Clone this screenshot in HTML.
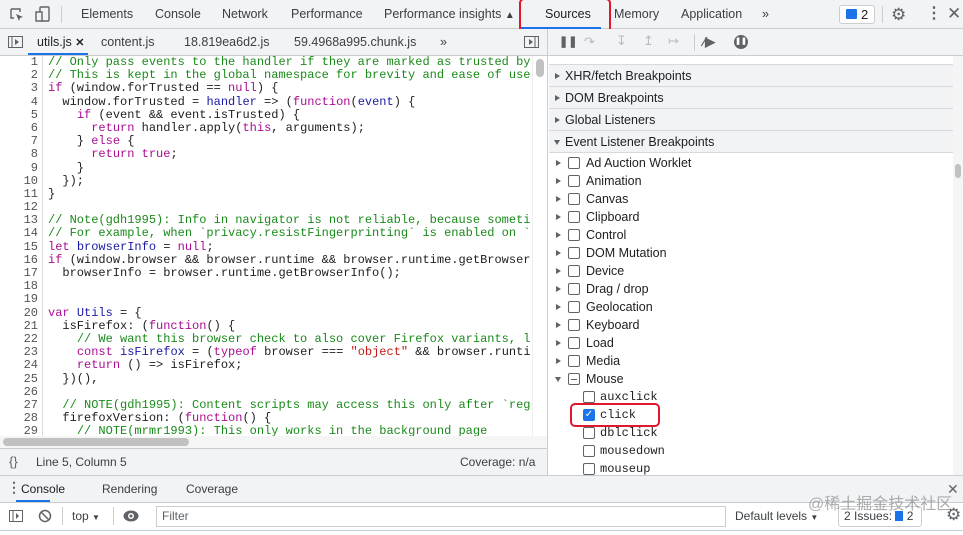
<!DOCTYPE html>
<html><head><meta charset="utf-8"><style>
*{box-sizing:border-box;margin:0;padding:0}
body{width:963px;height:535px;overflow:hidden;font-family:"Liberation Sans",sans-serif;font-size:12px;color:#202124;background:#fff;position:relative}
.abs{position:absolute}
.bar{background:#f1f3f4;border-bottom:1px solid #cbcdd1}
.t{position:absolute;top:0;line-height:29px;color:#3c4043;font-size:12.5px}
.code{position:absolute;left:0;top:56px;width:532px;height:380px;overflow:hidden;font-family:"Liberation Mono",monospace;font-size:12px;line-height:13.18px;white-space:pre}
.ln{position:absolute;left:0;width:38px;text-align:right;color:#555;top:0}
.src{position:absolute;left:48px;top:0}
.c{color:#1a8a1a}.k{color:#aa0d91}.v{color:#1c00cf}.d{color:#1a1aa6}.s{color:#c41a16}
.sec{position:absolute;left:549px;width:404px;height:22px;line-height:22px;background:#f1f3f4;border-bottom:1px solid #d7d9dc;padding-left:16px;font-size:12.5px}
.sec:before{content:"";position:absolute;left:6px;top:8px;border-left:5px solid #5f6368;border-top:3px solid transparent;border-bottom:3px solid transparent}
.sec.o:before{left:5px;top:9px;border-top:5px solid #5f6368;border-left:3px solid transparent;border-right:3px solid transparent;border-bottom:0}
.it{position:absolute;left:549px;height:18px;line-height:18px;font-size:12.5px}
.it .a{position:absolute;left:7px;top:6px;border-left:5px solid #5f6368;border-top:3px solid transparent;border-bottom:3px solid transparent}
.it .a.o{left:6px;top:7px;border-top:5px solid #5f6368;border-left:3px solid transparent;border-right:3px solid transparent;border-bottom:0}
.cb{position:absolute;width:12px;height:12px;border:1px solid #5f6368;border-radius:2px;top:3px;background:#fff}
.it span{position:absolute;white-space:nowrap}
.m{font-family:"Liberation Mono",monospace;font-size:12px}
</style></head><body>
<!-- top bar -->
<div class="abs bar" style="left:0;top:0;width:963px;height:29px"></div>
<svg class="abs" style="left:9px;top:7px" width="16" height="16"><path d="M2 2h9v3M2 2v9h3" fill="none" stroke="#5f6368" stroke-width="1.4"/><path d="M7 7l7 3-3 1-1 3z" fill="#5f6368"/></svg>
<svg class="abs" style="left:35px;top:6px" width="16" height="17"><rect x="5" y="1" width="9" height="14" rx="1" fill="none" stroke="#5f6368" stroke-width="1.4"/><rect x="1" y="6" width="6" height="9" fill="#f1f3f4" stroke="#5f6368" stroke-width="1.4"/></svg>
<div class="abs" style="left:61px;top:6px;width:1px;height:17px;background:#cbcdd1"></div>
<div class="t" style="left:81px">Elements</div>
<div class="t" style="left:155px">Console</div>
<div class="t" style="left:222px">Network</div>
<div class="t" style="left:291px">Performance</div>
<div class="t" style="left:384px">Performance insights <span style="font-size:10px">&#9650;</span></div>
<div class="t" style="left:545px;color:#202124">Sources</div>
<div class="abs" style="left:519px;top:27px;width:82px;height:2px;background:#1a73e8"></div>
<div class="abs" style="left:519px;top:-2px;width:92px;height:35px;border:2px solid #e0182d;border-radius:5px"></div>
<div class="t" style="left:614px">Memory</div>
<div class="t" style="left:681px">Application</div>
<div class="t" style="left:762px">»</div>
<div class="abs" style="left:839px;top:5px;width:36px;height:19px;border:1px solid #cbcdd1;border-radius:3px;background:#fff"></div>
<div class="abs" style="left:846px;top:9px;width:11px;height:10px;background:#1a73e8;border-radius:1px"></div>
<div class="abs" style="left:861px;top:5px;line-height:19px;font-size:13px">2</div>
<div class="abs" style="left:882px;top:6px;width:1px;height:17px;background:#cbcdd1"></div>
<div class="abs" style="left:891px;top:5px;font-size:17px;color:#5f6368">&#9881;</div>
<div class="abs" style="left:926px;top:3px;font-size:16px;color:#5f6368;font-weight:bold">&#8942;</div>
<div class="abs" style="left:947px;top:4px;font-size:17px;color:#5f6368">&#10005;</div>

<!-- file tabs -->
<div class="abs bar" style="left:0;top:29px;width:547px;height:27px"></div>
<svg class="abs" style="left:8px;top:36px" width="16" height="13"><rect x="0.5" y="0.5" width="14" height="11" fill="none" stroke="#5f6368"/><path d="M4 1v11" stroke="#5f6368"/><path d="M7 3l4 3-4 3z" fill="#5f6368"/></svg>
<div class="t" style="left:37px;top:29px;line-height:26px;color:#202124">utils.js <b style="font-size:11px">✕</b></div>
<div class="abs" style="left:28px;top:53px;width:60px;height:2px;background:#1a73e8"></div>
<div class="t" style="left:101px;top:29px;line-height:26px">content.js</div>
<div class="t" style="left:184px;top:29px;line-height:26px">18.819ea6d2.js</div>
<div class="t" style="left:294px;top:29px;line-height:26px">59.4968a995.chunk.js</div>
<div class="t" style="left:440px;top:29px;line-height:26px">»</div>
<svg class="abs" style="left:524px;top:36px" width="16" height="13"><rect x="0.5" y="0.5" width="14" height="11" fill="none" stroke="#5f6368"/><path d="M11 1v11" stroke="#5f6368"/><path d="M5 3l4 3-4 3z" fill="#5f6368"/></svg>

<!-- code -->
<div class="code"><div class="ln">1
2
3
4
5
6
7
8
9
10
11
12
13
14
15
16
17
18
19
20
21
22
23
24
25
26
27
28
29</div><div class="abs" style="left:42px;top:0;width:1px;height:380px;background:#ddd"></div><div class="src"><span class="c">// Only pass events to the handler if they are marked as trusted by</span>
<span class="c">// This is kept in the global namespace for brevity and ease of use</span>
<span class="k">if</span> (window.forTrusted == <span class="k">null</span>) {
  window.forTrusted = <span class="d">handler</span> => (<span class="k">function</span>(<span class="d">event</span>) {
    <span class="k">if</span> (event &amp;&amp; event.isTrusted) {
      <span class="k">return</span> handler.apply(<span class="k">this</span>, arguments);
    } <span class="k">else</span> {
      <span class="k">return</span> <span class="k">true</span>;
    }
  });
}

<span class="c">// Note(gdh1995): Info in navigator is not reliable, because someti</span>
<span class="c">// For example, when `privacy.resistFingerprinting` is enabled on `</span>
<span class="k">let</span> <span class="d">browserInfo</span> = <span class="k">null</span>;
<span class="k">if</span> (window.browser &amp;&amp; browser.runtime &amp;&amp; browser.runtime.getBrowser
  browserInfo = browser.runtime.getBrowserInfo();


<span class="k">var</span> <span class="d">Utils</span> = {
  isFirefox: (<span class="k">function</span>() {
    <span class="c">// We want this browser check to also cover Firefox variants, l</span>
    <span class="k">const</span> <span class="d">isFirefox</span> = (<span class="k">typeof</span> browser === <span class="s">"object"</span> &amp;&amp; browser.runti
    <span class="k">return</span> () => isFirefox;
  })(),

  <span class="c">// NOTE(gdh1995): Content scripts may access this only after `reg</span>
  firefoxVersion: (<span class="k">function</span>() {
    <span class="c">// NOTE(mrmr1993): This only works in the background page</span></div></div>
<div class="abs" style="left:532px;top:56px;width:15px;height:380px;background:#fff;border-left:1px solid #eee"></div>
<div class="abs" style="left:536px;top:59px;width:8px;height:18px;background:#c1c1c1;border-radius:4px"></div>
<div class="abs" style="left:0;top:436px;width:547px;height:12px;background:#f5f5f5"></div>
<div class="abs" style="left:3px;top:438px;width:186px;height:8px;background:#c1c1c1;border-radius:4px"></div>
<!-- status -->
<div class="abs bar" style="left:0;top:448px;width:547px;height:28px;border-top:1px solid #cbcdd1"></div>
<div class="abs" style="left:9px;top:453px;line-height:18px;font-size:13px;color:#5f6368">{}</div>
<div class="abs" style="left:36px;top:453px;line-height:18px;font-size:12px;color:#3c4043">Line 5, Column 5</div>
<div class="abs" style="left:460px;top:453px;line-height:18px;font-size:12px;color:#3c4043">Coverage: n/a</div>
<div class="abs" style="left:547px;top:29px;width:1px;height:447px;background:#cbcdd1"></div>

<!-- right panel -->
<div class="abs bar" style="left:548px;top:29px;width:415px;height:27px"></div>
<div class="abs" style="left:559px;top:35px;font-size:11px;font-weight:bold;color:#5f6368">&#10074;&#10074;</div>
<div class="abs" style="left:584px;top:34px;color:#bbb;font-size:13px">&#8631;</div>
<div class="abs" style="left:616px;top:33px;color:#bbb;font-size:13px">&#8615;</div>
<div class="abs" style="left:643px;top:33px;color:#bbb;font-size:13px">&#8613;</div>
<div class="abs" style="left:668px;top:33px;color:#bbb;font-size:13px">&#8614;</div>
<div class="abs" style="left:694px;top:34px;width:1px;height:17px;background:#cbcdd1"></div>
<div class="abs" style="left:703px;top:34px;font-size:13px;color:#5f6368;font-weight:bold">&#x2215;&#9654;</div>
<div class="abs" style="left:734px;top:35px;width:14px;height:14px;border-radius:50%;background:#5f6368;color:#fff;font-size:7px;line-height:14px;text-align:center;font-weight:bold">&#10074;&#10074;</div>
<div class="abs" style="left:549px;top:56px;width:404px;height:9px;border-bottom:1px solid #d7d9dc"></div>
<div class="sec" style="top:65px">XHR/fetch Breakpoints</div>
<div class="sec" style="top:87px">DOM Breakpoints</div>
<div class="sec" style="top:109px">Global Listeners</div>
<div class="sec o" style="top:131px">Event Listener Breakpoints</div>
<div class="abs" style="left:953px;top:56px;width:10px;height:420px;background:#f5f5f5"></div>
<div class="abs" style="left:955px;top:164px;width:6px;height:14px;background:#c1c1c1;border-radius:3px"></div>

<div class="it" style="top:154px"><i class="a"></i><i class="cb" style="left:19px"></i><span style="left:37px">Ad Auction Worklet</span></div>
<div class="it" style="top:172px"><i class="a"></i><i class="cb" style="left:19px"></i><span style="left:37px">Animation</span></div>
<div class="it" style="top:190px"><i class="a"></i><i class="cb" style="left:19px"></i><span style="left:37px">Canvas</span></div>
<div class="it" style="top:208px"><i class="a"></i><i class="cb" style="left:19px"></i><span style="left:37px">Clipboard</span></div>
<div class="it" style="top:226px"><i class="a"></i><i class="cb" style="left:19px"></i><span style="left:37px">Control</span></div>
<div class="it" style="top:244px"><i class="a"></i><i class="cb" style="left:19px"></i><span style="left:37px">DOM Mutation</span></div>
<div class="it" style="top:262px"><i class="a"></i><i class="cb" style="left:19px"></i><span style="left:37px">Device</span></div>
<div class="it" style="top:280px"><i class="a"></i><i class="cb" style="left:19px"></i><span style="left:37px">Drag / drop</span></div>
<div class="it" style="top:298px"><i class="a"></i><i class="cb" style="left:19px"></i><span style="left:37px">Geolocation</span></div>
<div class="it" style="top:316px"><i class="a"></i><i class="cb" style="left:19px"></i><span style="left:37px">Keyboard</span></div>
<div class="it" style="top:334px"><i class="a"></i><i class="cb" style="left:19px"></i><span style="left:37px">Load</span></div>
<div class="it" style="top:352px"><i class="a"></i><i class="cb" style="left:19px"></i><span style="left:37px">Media</span></div>
<div class="it" style="top:370px"><i class="a o"></i><i class="cb" style="left:19px"><i class="abs" style="left:2px;top:5px;width:6px;height:1px;background:#5f6368"></i></i><span style="left:37px">Mouse</span></div>
<div class="it" style="top:388px"><i class="cb" style="left:34px"></i><span class="m" style="left:51px">auxclick</span></div>
<div class="it" style="top:406px"><i class="cb" style="left:34px;background:#1a73e8;border-color:#1a73e8;color:#fff;font-size:10px;line-height:10px;text-align:center;font-style:normal">&#10003;</i><span class="m" style="left:51px">click</span></div>
<div class="abs" style="left:570px;top:403px;width:90px;height:24px;border:2px solid #e0182d;border-radius:5px"></div>
<div class="it" style="top:424px"><i class="cb" style="left:34px"></i><span class="m" style="left:51px">dblclick</span></div>
<div class="it" style="top:442px"><i class="cb" style="left:34px"></i><span class="m" style="left:51px">mousedown</span></div>
<div class="it" style="top:460px"><i class="cb" style="left:34px"></i><span class="m" style="left:51px">mouseup</span></div>

<!-- drawer -->
<div class="abs bar" style="left:0;top:475px;width:963px;height:28px;border-top:1px solid #cbcdd1"></div>
<div class="abs" style="left:7px;top:479px;font-size:14px;color:#5f6368;font-weight:bold">&#8942;</div>
<div class="abs" style="left:21px;top:476px;line-height:26px;color:#202124">Console</div>
<div class="abs" style="left:16px;top:500px;width:34px;height:2px;background:#1a73e8"></div>
<div class="abs" style="left:102px;top:476px;line-height:26px;color:#3c4043">Rendering</div>
<div class="abs" style="left:186px;top:476px;line-height:26px;color:#3c4043">Coverage</div>
<div class="abs" style="left:947px;top:476px;line-height:26px;color:#5f6368;font-size:14px">✕</div>
<div class="abs" style="left:0;top:503px;width:963px;height:28px;border-bottom:1px solid #cbcdd1;background:#fff"></div>
<svg class="abs" style="left:9px;top:510px" width="15" height="13"><rect x="0.5" y="0.5" width="13" height="11" fill="none" stroke="#5f6368"/><path d="M4 1v11" stroke="#5f6368"/><path d="M7 3l3 3-3 3z" fill="#5f6368"/></svg>
<svg class="abs" style="left:38px;top:509px" width="15" height="15"><circle cx="7" cy="7" r="5.5" fill="none" stroke="#5f6368" stroke-width="1.5"/><path d="M3 3l8 8" stroke="#5f6368" stroke-width="1.5"/></svg>
<div class="abs" style="left:62px;top:507px;width:1px;height:18px;background:#cbcdd1"></div>
<div class="abs" style="left:72px;top:508px;line-height:16px;color:#3c4043">top <span style="font-size:8px">&#9660;</span></div>
<div class="abs" style="left:113px;top:507px;width:1px;height:18px;background:#cbcdd1"></div>
<svg class="abs" style="left:123px;top:509px" width="17" height="14"><ellipse cx="8" cy="7" rx="7.5" ry="5.5" fill="#5f6368"/><circle cx="8" cy="7" r="3" fill="#fff"/><circle cx="8" cy="7" r="1.5" fill="#5f6368"/></svg>
<div class="abs" style="left:156px;top:506px;width:570px;height:21px;border:1px solid #cbcdd1;background:#fff;padding-left:5px;line-height:19px;color:#5f6368">Filter</div>
<div class="abs" style="left:735px;top:508px;line-height:16px;color:#3c4043">Default levels <span style="font-size:8px">&#9660;</span></div>
<div class="abs" style="left:838px;top:506px;width:84px;height:21px;border:1px solid #cbcdd1;border-radius:3px;line-height:19px;padding-left:5px;color:#3c4043">2 Issues: <i style="display:inline-block;width:8px;height:10px;background:#1a73e8;vertical-align:-1px"></i> 2</div>
<div class="abs" style="left:808px;top:494px;line-height:22px;font-size:16px;color:rgba(140,140,140,.7);font-family:'Liberation Sans','Noto Sans CJK SC',sans-serif">@稀土掘金技术社区</div>
<div class="abs" style="left:946px;top:505px;font-size:17px;color:#5f6368">&#9881;</div>
</body></html>
